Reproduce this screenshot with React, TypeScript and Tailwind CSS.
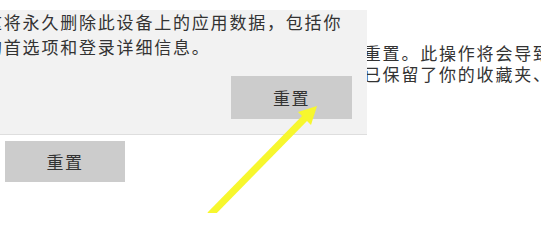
const cjk = { fontFamily: '"Noto Sans CJK SC", "Noto Sans", sans-serif' };

function ResetButton({ className }: { className: string }) {
  return (
    <button
      className={`flex items-center justify-center bg-[#cccccc] text-[17px] tracking-[1.5px] text-[#333333] ${className}`}
      style={cjk}
    >
      重置
    </button>
  );
}

function ResetFlyout() {
  return (
    <div className="absolute left-0 top-[10px] flex h-[125px] w-[367px] flex-col overflow-hidden border-b border-[#dedede] bg-[#f2f2f2]">
      <div
        className="ml-[-15px] mt-[-1px] whitespace-nowrap text-[17px] leading-[25px] tracking-[1.8px] text-[#333333]"
        style={cjk}
      >
        <p>这将永久删除此设备上的应用数据，包括你</p>
        <p>的首选项和登录详细信息。</p>
      </div>
      <div className="mt-[17px] flex justify-end pr-[15px]">
        <ResetButton className="h-[43px] w-[121px]" />
      </div>
    </div>
  );
}

function Arrow() {
  return (
    <svg className="pointer-events-none absolute inset-0" width="541" height="213" viewBox="0 0 541 213">
      <line x1="210" y1="215" x2="306" y2="117" stroke="#f7f72e" strokeWidth="7" />
      <polygon points="317,106 311,125 298,112" fill="#f7f72e" />
    </svg>
  );
}

export default function App() {
  return (
    <div className="relative h-[213px] w-[541px] overflow-hidden bg-white">
      <div className="flex flex-col">
        <div
          className="whitespace-nowrap pl-[345px] pt-[42px] text-[17px] leading-[21px] tracking-[1.8px] text-[#333333]"
          style={cjk}
        >
          <p>置重置。此操作将会导致</p>
          <p>但已保留了你的收藏夹、阅读列表</p>
        </div>
        <ResetButton className="ml-[5px] mt-[57px] h-[41px] w-[120px]" />
      </div>
      <ResetFlyout />
      <Arrow />
    </div>
  );
}
